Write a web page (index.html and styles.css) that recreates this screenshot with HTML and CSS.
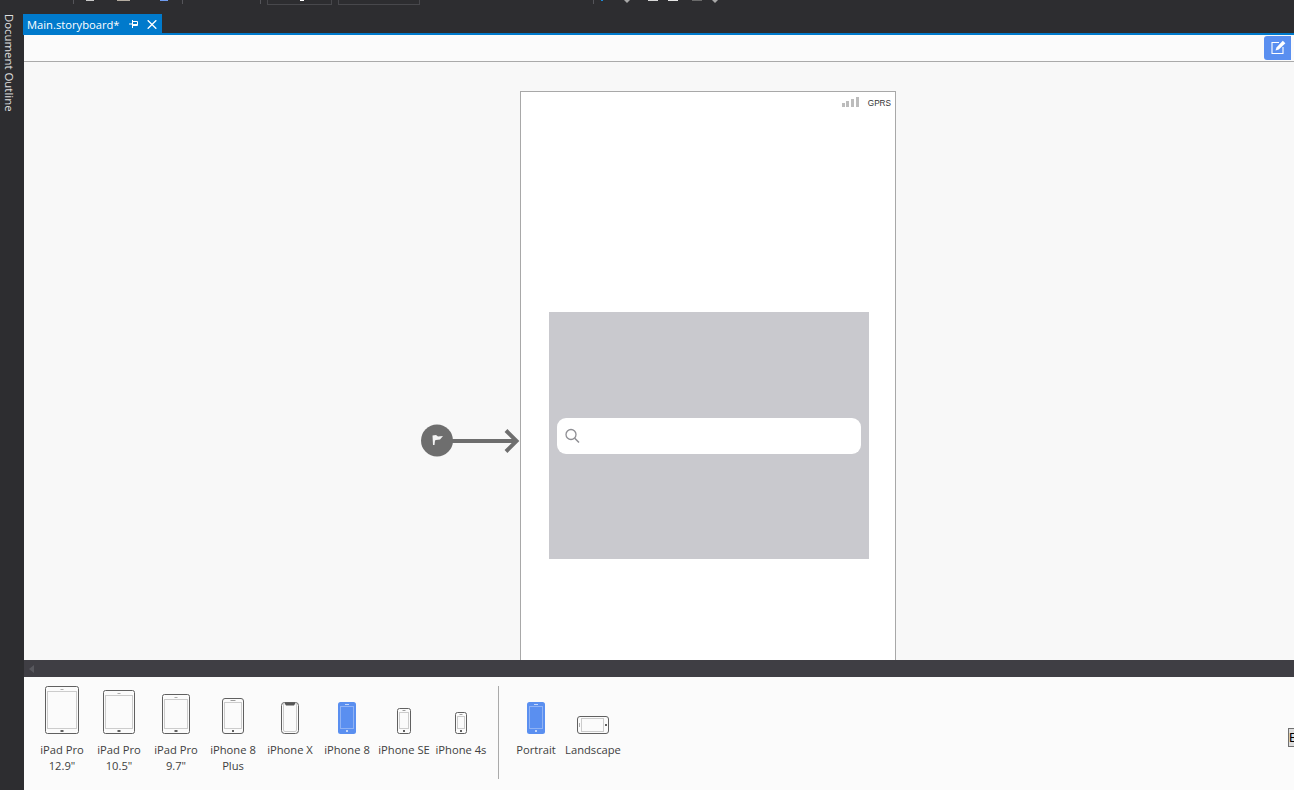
FILE: index.html
```html
<!DOCTYPE html>
<html lang="en">
<head>
<meta charset="utf-8">
<title>Main.storyboard</title>
<link rel="stylesheet" href="styles.css">
</head>
<body>
<div class="app">
  <div class="toolbar">
    <i class="sep s1"></i><i class="chip c1"></i><i class="chip c2"></i><i class="chip c3"></i><i class="sep s2"></i><i class="sep s3"></i>
    <div class="tbox b1"><i class="tbox-mark"></i></div><div class="tbox b2"></div>
    <i class="sep s4"></i><i class="chip c4"></i><i class="drop c5"></i><i class="chip c6"></i><i class="chip c7"></i><i class="chip c8"></i><i class="drop c9"></i>
  </div>
  <div class="workspace">
    <aside class="sidebar"><span class="sidebar-label">Document Outline</span></aside>
    <div class="main">
      <div class="tabstrip">
        <div class="tab">
          <span class="tab-title">Main.storyboard*</span>
          <svg class="tab-pin" width="9" height="8" viewBox="0 0 9 8"><path d="M0 4h3M3.500 0v8" fill="none" stroke="#fff" stroke-width="1"/><path d="M3.500 1.500h5v4h-5" fill="none" stroke="#fff" stroke-width="1"/><path d="M4 4.500h4" stroke="#fff" stroke-width="1"/></svg>
          <svg class="tab-close" width="10" height="9" viewBox="0 0 10 9"><path d="M.7.300l8.600 8.400M9.300.300L.7 8.700" fill="none" stroke="#fff" stroke-width="1.400"/></svg>
        </div>
      </div>
      <div class="accent"></div>
      <div class="content">
        <div class="designbar">
          <button class="edit-btn" type="button" aria-label="Edit">
            <svg width="16" height="16" viewBox="0 0 16 16"><path d="M9 2.500H2v11h11V7" fill="none" stroke="#fff" stroke-width="1.100"/><path d="M5.500 10.500l1-3L12.800.800l2.600 2.500-6.600 6.300z" fill="#fff"/></svg>
          </button>
        </div>
        <div class="canvas">
          <svg class="entry" width="100" height="36" viewBox="0 0 100 36">
            <circle cx="16" cy="17.500" r="16" fill="#6e6e6e"/>
            <path d="M30 18h64" stroke="#6e6e6e" stroke-width="4"/>
            <path d="M85 7.500L95.500 18 85 28.500" fill="none" stroke="#6e6e6e" stroke-width="4"/>
            <path d="M11.500 12.500l3.500-.5 2 1.500 5-.5-3 3.500-4 .5-1 .5-.5 4.500H12z" fill="#f4f4f4"/>
          </svg>
          <div class="phone">
            <div class="status">
              <div class="signal"><i class="bar h1"></i><i class="bar h2"></i><i class="bar h3"></i><i class="bar h4"></i></div>
              <span class="carrier">GPRS</span>
            </div>
            <div class="search-view">
              <div class="search-field">
                <svg width="16" height="16" viewBox="0 0 16 16"><circle cx="6" cy="6.500" r="5" fill="none" stroke="#8e8e93" stroke-width="1.300"/><path d="M9.700 10.200l4.300 4.300" stroke="#8e8e93" stroke-width="1.500"/></svg>
              </div>
            </div>
          </div>
        </div>
        <div class="strip"><i class="strip-arrow"></i></div>
        <div class="devices">
          <div class="device">
            <div class="device-icon"><svg width="34" height="48" viewBox="0 0 34 48"><rect class="body" x=".5" y=".5" width="33" height="47" rx="2"/><rect class="screen" x="2.500" y="5.500" width="29" height="37"/><rect class="dot" x="15.500" y="3" width="3" height="1" opacity=".5"/><rect class="dot" x="15.500" y="44" width="3" height="2"/></svg></div>
            <span class="device-name">iPad Pro 12.9"</span>
          </div>
          <div class="device">
            <div class="device-icon"><svg width="32" height="44" viewBox="0 0 32 44"><rect class="body" x=".5" y=".5" width="31" height="43" rx="2"/><rect class="screen" x="2.500" y="5.500" width="27" height="33"/><rect class="dot" x="14.500" y="3" width="3" height="1" opacity=".5"/><rect class="dot" x="14.500" y="40" width="3" height="2"/></svg></div>
            <span class="device-name">iPad Pro 10.5"</span>
          </div>
          <div class="device">
            <div class="device-icon"><svg width="28" height="40" viewBox="0 0 28 40"><rect class="body" x=".5" y=".5" width="27" height="39" rx="2"/><rect class="screen" x="2.500" y="5.500" width="23" height="29"/><rect class="dot" x="12.500" y="3" width="3" height="1" opacity=".5"/><rect class="dot" x="12.500" y="36" width="3" height="2"/></svg></div>
            <span class="device-name">iPad Pro 9.7"</span>
          </div>
          <div class="device">
            <div class="device-icon"><svg width="22" height="36" viewBox="0 0 22 36"><rect class="body" x=".5" y=".5" width="21" height="35" rx="2.500"/><rect class="screen" x="2.500" y="4.500" width="17" height="26"/><rect class="dot" x="8.500" y="2" width="5" height="1" opacity=".6"/><rect class="dot" x="10" y="32" width="2" height="2"/></svg></div>
            <span class="device-name">iPhone 8 Plus</span>
          </div>
          <div class="device">
            <div class="device-icon"><svg width="18" height="32" viewBox="0 0 18 32"><rect class="body" x=".5" y=".5" width="17" height="31" rx="3"/><rect class="screen" x="2.500" y="1.500" width="13" height="28" rx="1.500"/><path class="notch" d="M4 1h10v1l-1 1.500H5L4 2z"/></svg></div>
            <span class="device-name">iPhone X</span>
          </div>
          <div class="device">
            <div class="device-icon"><svg width="18" height="32" viewBox="0 0 18 32"><rect class="blue-body" width="18" height="32" rx="2.500"/><rect class="blue-screen" x="2.500" y="4.500" width="13" height="22"/><rect class="blue-dot" x="7" y="2" width="4" height="1"/><rect class="blue-dot" x="8" y="28" width="2" height="2"/></svg></div>
            <span class="device-name">iPhone 8</span>
          </div>
          <div class="device">
            <div class="device-icon"><svg width="14" height="26" viewBox="0 0 14 26"><rect class="body" x=".5" y=".5" width="13" height="25" rx="2"/><rect class="screen" x="2.500" y="4.500" width="9" height="16"/><rect class="dot" x="5.500" y="2" width="3" height="1" opacity=".6"/><rect class="dot" x="6" y="22" width="2" height="2"/></svg></div>
            <span class="device-name">iPhone SE</span>
          </div>
          <div class="device">
            <div class="device-icon"><svg width="12" height="22" viewBox="0 0 12 22"><rect class="body" x=".5" y=".5" width="11" height="21" rx="2"/><rect class="screen" x="2.500" y="4.500" width="7" height="12"/><rect class="dot" x="4.500" y="2" width="3" height="1" opacity=".6"/><rect class="dot" x="5" y="18" width="2" height="2"/></svg></div>
            <span class="device-name">iPhone 4s</span>
          </div>
          <div class="divider"></div>
          <div class="device">
            <div class="device-icon"><svg width="18" height="32" viewBox="0 0 18 32"><rect class="blue-body" width="18" height="32" rx="2.500"/><rect class="blue-screen" x="2.500" y="4.500" width="13" height="22"/><rect class="blue-dot" x="7" y="2" width="4" height="1"/><rect class="blue-dot" x="8" y="28" width="2" height="2"/></svg></div>
            <span class="device-name">Portrait</span>
          </div>
          <div class="device">
            <div class="device-icon"><svg width="32" height="18" viewBox="0 0 32 18"><rect class="body" x=".5" y=".5" width="31" height="17" rx="2.500"/><rect class="screen" x="4.500" y="2.500" width="22" height="13"/><rect class="dot" x="2" y="7" width="1" height="4" opacity=".5"/><rect class="dot" x="28" y="8" width="2" height="2"/></svg></div>
            <span class="device-name">Landscape</span>
          </div>
          <div class="clipped-btn">E</div>
        </div>
      </div>
    </div>
  </div>
</div>
</body>
</html>
```
FILE: styles.css
```css
* { box-sizing: border-box; }
html, body { margin: 0; height: 100%; overflow: hidden; }
body { background: #2d2d30; font-family: "Open Sans", "Noto Sans", sans-serif; }
i { display: block; }
.app { width: 1294px; height: 790px; display: flex; flex-direction: column; overflow: hidden; }

.toolbar { height: 14px; flex: none; display: flex; align-items: flex-start; }
.sep { width: 1px; height: 4px; background: #55555a; flex: none; }
.chip { height: 1px; flex: none; }
.drop { width: 0; height: 0; flex: none; border-style: solid; border-width: 3px 3px 0; border-color: #a8a8a8 transparent transparent; }
.s1 { margin-left: 73px; }
.c1 { margin-left: 12px; width: 8px; background: #c8c8c8; }
.c2 { margin-left: 23px; width: 13px; background: #b4aca0; }
.c3 { margin-left: 30px; width: 8px; background: #6f9cf0; }
.s2 { margin-left: 14px; }
.s3 { margin-left: 77px; }
.tbox { height: 5px; border: 1px solid #48484c; border-top: 0; flex: none; }
.b1 { margin-left: 6px; width: 65px; padding-left: 32px; }
.b2 { margin-left: 6px; width: 82px; }
.tbox-mark { width: 4px; height: 1px; background: #fff; }
.s4 { margin-left: 173px; }
.c4 { margin-left: 7px; width: 2px; height: 1px; background: #1f8ad6; }
.c5 { margin-left: 21px; }
.c6 { margin-left: 18px; width: 10px; background: #d8d8d8; }
.c7 { margin-left: 10px; width: 10px; background: #e6e6e6; }
.c8 { margin-left: 14px; width: 10px; background: #6a6a6a; }
.c9 { margin-left: 10px; }

.workspace { flex: 1; display: flex; min-height: 0; }
.sidebar { width: 23px; flex: none; background: #2d2d30; }
.sidebar-label { display: block; writing-mode: vertical-rl; color: #e0e0e0; font-size: 11.400px; line-height: 16px; margin-left: 1px; white-space: nowrap; }

.main { flex: 1; min-width: 0; display: flex; flex-direction: column; }
.tabstrip { height: 19px; flex: none; display: flex; }
.tab { width: 139px; background: #007acc; display: flex; align-items: center; padding: 1px 0 0 4px; color: #fff; }
.tab-title { font-size: 11.200px; line-height: 19px; width: 102px; white-space: nowrap; padding-top: 1px; }
.tab-close { margin-left: 9px; }
.accent { height: 2px; flex: none; background: #007acc; }

.content { flex: 1; min-height: 0; display: flex; flex-direction: column; border-left: 1px solid #2d2d30; background: #fbfbfb; }
.designbar { height: 27px; flex: none; background: #fbfbfb; border-bottom: 1px solid #aaaaaa; display: flex; justify-content: flex-end; align-items: flex-start; padding: 1px 3px 0 0; }
.edit-btn { width: 27px; height: 24px; padding: 0; border: 0; border-radius: 3px 0 0 3px; background: #5a8ff0; display: flex; align-items: center; justify-content: center; }

.canvas { height: 598px; flex: none; position: relative; overflow: hidden; background: #f8f8f8; }
.entry { position: absolute; left: 397px; top: 361px; }
.phone { position: absolute; left: 496px; top: 29px; width: 376px; height: 640px; background: #fff; border: 1px solid #a8a8a8; }
.status { height: 220px; display: flex; justify-content: flex-end; align-items: flex-start; padding: 5px 4px 0 0; }
.signal { display: flex; align-items: flex-end; gap: 1.700px; height: 10px; margin-right: 9px; }
.bar { width: 3px; background: #bcbcbc; }
.h1 { height: 4px; } .h2 { height: 6px; } .h3 { height: 8px; } .h4 { height: 10px; }
.carrier { font: 8.200px/12px "Liberation Sans", sans-serif; color: #333; margin-top: 1px; }
.search-view { width: 320px; height: 247px; margin-left: 28px; background: #c9c9ce; display: flex; align-items: center; padding: 0 8px; }
.search-field { width: 304px; height: 36px; margin-top: 1px; background: #fff; border-radius: 9px; display: flex; align-items: center; padding-left: 8px; }

.strip { height: 17px; flex: none; background: #3f3e44; display: flex; align-items: center; padding-left: 5px; }
.strip-arrow { width: 0; height: 0; border-style: solid; border-width: 4.500px 5px 4.500px 0; border-color: transparent #58585e transparent transparent; }

.devices { flex: 1; min-height: 0; display: flex; align-items: flex-start; padding: 9px 0 0 9.500px; background: #fbfbfb; overflow: hidden; }
.device { width: 57px; flex: none; display: flex; flex-direction: column; align-items: center; }
.device-icon { height: 48px; display: flex; align-items: flex-end; justify-content: center; }
.device-icon svg { display: block; }
.device-name { margin-top: 8px; font-size: 11.200px; line-height: 16px; color: #404040; text-align: center; width: 62px; flex: none; }
.divider { width: 1px; height: 93px; background: #aaaaaa; margin: 0 8.500px; flex: none; }
.body { fill: none; stroke: #606060; stroke-width: 1; }
.screen { fill: none; stroke: #cccccc; stroke-width: 1; }
.dot { fill: #606060; }
.notch { fill: #555; }
.blue-body { fill: #5a8ff0; }
.blue-screen { fill: none; stroke: #8fb2f4; stroke-width: 1; }
.blue-dot { fill: #c4d6f8; }
.clipped-btn { margin-left: auto; margin-top: 42px; width: 6px; height: 19px; flex: none; overflow: hidden; background: #dddddd; border: 1px solid #707070; border-right: 0; font: 13px/17px "Liberation Sans", sans-serif; color: #000; }
```
